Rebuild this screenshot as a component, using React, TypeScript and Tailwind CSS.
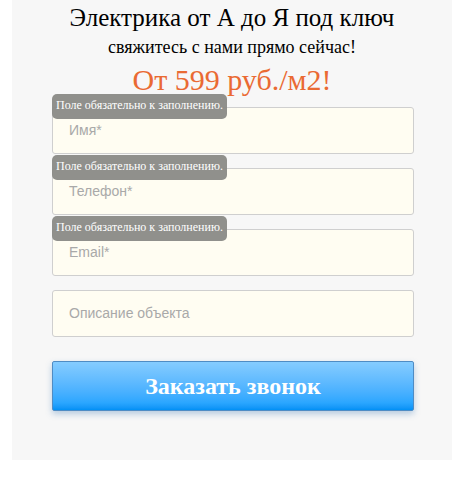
const fields = [
  { placeholder: "Имя*", required: true },
  { placeholder: "Телефон*", required: true },
  { placeholder: "Email*", required: true },
  { placeholder: "Описание объекта", required: false },
];

function Field({ placeholder, required }: { placeholder: string; required: boolean }) {
  return (
    <div className="relative">
      <div className="flex h-[47px] items-center rounded-[3px] border border-[#cfcfcf] bg-[#fffdf2] pl-[16px] font-['Liberation_Sans',Arial,sans-serif] text-[14px] text-[#a9a9a9]">
        {placeholder}
      </div>
      {required ? (
        <div className="absolute left-0 top-[-13px] h-[25px] w-[175px] rounded-[5px] bg-[#8a8a86]/95 pl-[4px] pt-[4px] font-['Liberation_Serif','Times_New_Roman',serif] text-[12px] leading-[14px] text-white">
          Поле обязательно к заполнению.
        </div>
      ) : null}
    </div>
  );
}

export default function App() {
  return (
    <div className="h-[477px] w-[468px] bg-white">
      <div className="mx-[12px] flex h-[460px] w-[440px] flex-col bg-[#f7f7f7] font-['Liberation_Serif','Times_New_Roman',serif]">
        <p className="mt-[3px] text-center text-[25px] leading-[29px] text-black">Электрика от А до Я под ключ</p>
        <p className="mt-[5px] text-center text-[18px] leading-[21px] text-black">свяжитесь с нами прямо сейчас!</p>
        <p className="mt-[5px] text-center text-[30px] leading-[34px] text-[#ea6a33]">От 599 руб./м2!</p>
        <div className="ml-[40px] mt-[10px] flex w-[362px] flex-col gap-[14px]">
          {fields.map((field) => (
            <Field key={field.placeholder} placeholder={field.placeholder} required={field.required} />
          ))}
        </div>
        <button
          type="button"
          className="ml-[40px] mt-[24px] h-[50px] w-[362px] rounded-[2px] border border-[#4f8cc4] bg-gradient-to-b from-[#85ccff] via-[#2aa6ff] via-85% to-[#0090f5] text-[24px] font-bold text-white shadow-[0_3px_6px_rgba(60,120,180,0.35)]"
        >
          Заказать звонок
        </button>
      </div>
    </div>
  );
}
